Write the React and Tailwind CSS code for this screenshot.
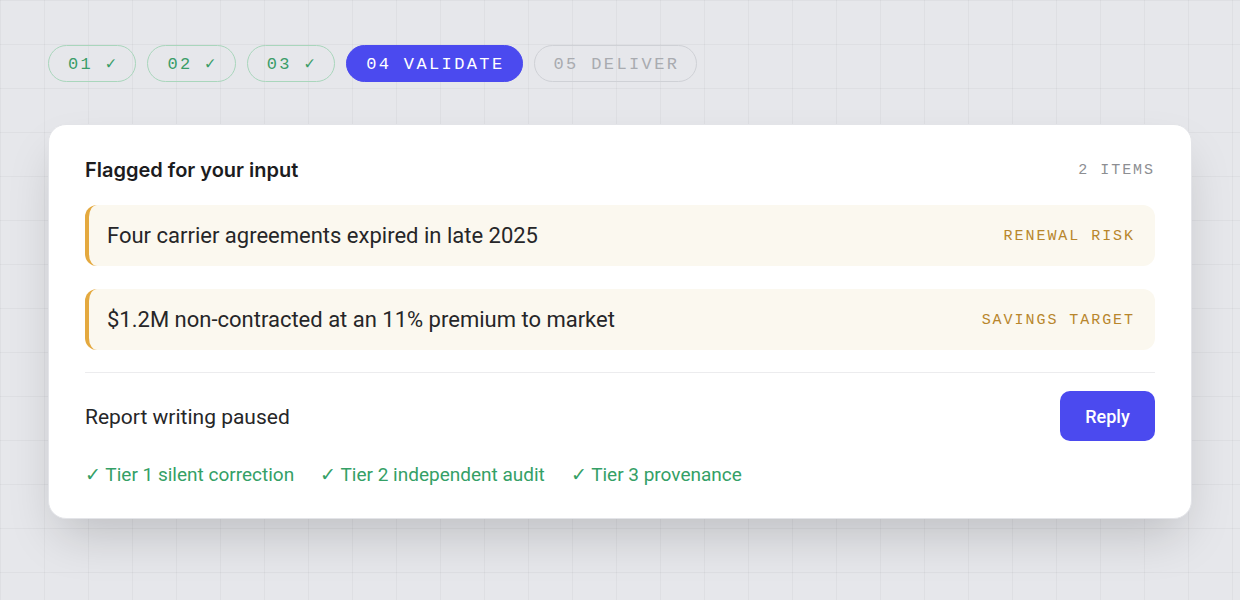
import React from 'react'

const steps = [
  { label: '01 ✓', state: 'done' },
  { label: '02 ✓', state: 'done' },
  { label: '03 ✓', state: 'done' },
  { label: '04 VALIDATE', state: 'active' },
  { label: '05 DELIVER', state: 'todo' },
]

const flags = [
  { text: 'Four carrier agreements expired in late 2025', tag: 'RENEWAL RISK' },
  { text: '$1.2M non-contracted at an 11% premium to market', tag: 'SAVINGS TARGET' },
]

const tiers = ['Tier 1 silent correction', 'Tier 2 independent audit', 'Tier 3 provenance']

function StepPill({ label, state }) {
  const base = "h-[37px] pl-[19px] pr-[17px] pt-[3px] rounded-full flex items-center text-[17px] tracking-[0.14em] font-['Liberation_Mono',monospace]"
  if (state === 'active')
    return <div className={`${base} bg-[#4b4aef] text-white border border-[#4b4aef]`}>{label}</div>
  if (state === 'done')
    return <div className={`${base} border border-[#a9d6bc] text-[#3b9d68]`}>{label}</div>
  return <div className={`${base} border border-[#cfd1d6] text-[#a9abb0]`}>{label}</div>
}

export default function App() {
  return (
    <div className="w-[1240px] h-[600px] overflow-hidden bg-[#e6e7eb] bg-[linear-gradient(to_right,rgba(0,0,0,0.035)_1px,transparent_1px),linear-gradient(to_bottom,rgba(0,0,0,0.035)_1px,transparent_1px)] bg-[size:44px_44px] px-12 pt-[45px] font-['Roboto',sans-serif]">
      <div className="flex gap-[11px]">
        {steps.map((s) => (
          <StepPill key={s.label} {...s} />
        ))}
      </div>

      <div className="mt-[42px] w-[1144px] bg-white rounded-[18px] border border-[#e3e4e8] shadow-[0_24px_50px_-10px_rgba(0,0,0,0.18)] px-[36px] pt-[30px] pb-[28px]">
        <div className="flex items-center justify-between">
          <h2 className="text-[20px] font-semibold text-[#1c1c1e] font-['Inter',sans-serif]">Flagged for your input</h2>
          <span className="pt-[3px] text-[15px] tracking-[0.13em] text-[#8d8e92] font-['Liberation_Mono',monospace]">2 ITEMS</span>
        </div>

        <div className="mt-[20px] flex flex-col gap-[23px]">
          {flags.map((f) => (
            <div key={f.tag} className="h-[61px] rounded-[12px] bg-[#fbf8ef] border-l-[4px] border-[#e4a93f] pl-[18px] pr-[20px] flex items-center justify-between">
              <span className="text-[22px] text-[#262628]">{f.text}</span>
              <span className="pt-[4px] text-[15px] tracking-[0.13em] text-[#b8862c] font-['Liberation_Mono',monospace]">{f.tag}</span>
            </div>
          ))}
        </div>

        <div className="mt-[22px] h-px bg-[#ececee]" />

        <div className="mt-[18px] flex items-center justify-between">
          <span className="pt-[3px] text-[21px] text-[#262628]">Report writing paused</span>
          <button className="h-[50px] w-[95px] rounded-[10px] bg-[#4b4aef] text-white text-[18px] font-medium">Reply</button>
        </div>

        <div className="mt-[20px] flex gap-[26px] text-[19px] text-[#34a066]">
          {tiers.map((t) => (
            <span key={t}>✓ {t}</span>
          ))}
        </div>
      </div>
    </div>
  )
}
